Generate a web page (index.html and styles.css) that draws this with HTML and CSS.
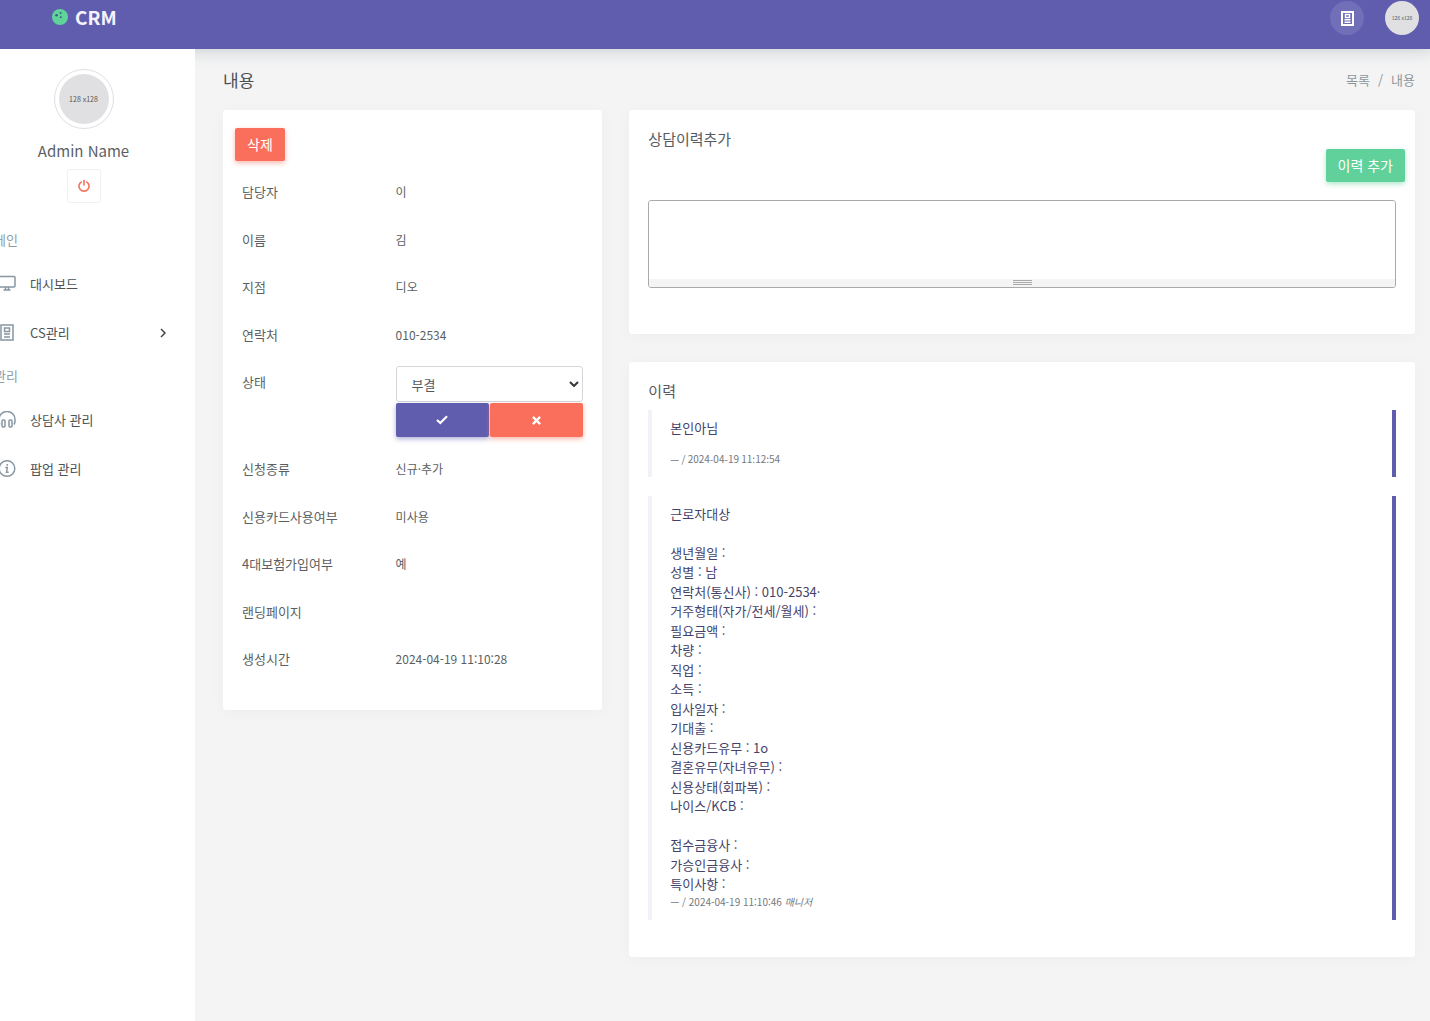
FILE: index.html
```html
<!DOCTYPE html>
<html lang="ko">
<head>
<meta charset="utf-8">
<meta name="viewport" content="width=device-width, initial-scale=1">
<title>CRM</title>
<link rel="stylesheet" href="styles.css">
</head>
<body>
<header class="topbar">
  <a class="brand" href="#">
    <svg class="brand-mark" viewBox="0 0 16 16" aria-hidden="true"><circle cx="8" cy="8" r="8" fill="#5fd39a"/><g fill="#3d5b87"><circle cx="4.600" cy="6.200" r="1.300"/><circle cx="8.600" cy="4" r="1"/><circle cx="8.800" cy="8.200" r="1"/></g></svg>
    <span>CRM</span>
  </a>
  <div class="topbar-tools">
    <button class="tool" type="button" aria-label="CS관리">
      <svg width="13" height="15" viewBox="0 0 13 15" fill="none" stroke="#fff" aria-hidden="true"><rect x="1" y="1" width="11" height="13" stroke-width="2"/><rect x="4.500" y="3.500" width="4" height="3" stroke-width="1.400"/><path d="M3.500 8.800h6M3.500 11.200h6" stroke-width="1.400"/></svg>
    </button>
    <a class="tool-avatar" href="#">128 x128</a>
  </div>
</header>
<div class="shell">
  <nav class="sidebar">
    <div class="profile">
      <div class="avatar-ring"><span class="avatar">128 x128</span></div>
      <div class="profile-name">Admin Name</div>
      <button class="power" type="button" aria-label="로그아웃">
        <svg width="12" height="12" viewBox="0 0 12 12" fill="none" stroke="#f9705d" stroke-width="1.600" aria-hidden="true"><path d="M3.800 1.600a5 5 0 1 0 4.400 0M6 0v5.600"/></svg>
      </button>
    </div>
    <h2 class="menu-title">메인</h2>
    <ul class="menu">
      <li><a href="#">
        <svg viewBox="0 0 18 18" aria-hidden="true"><rect x="1" y="1.500" width="16" height="10.500" rx="1"/><path d="M7.500 12v3M10.500 12v3M5.500 15h7"/></svg>
        <span>대시보드</span></a></li>
      <li><a href="#">
        <svg viewBox="0 0 18 18" aria-hidden="true"><path d="M3 1h12v15H3zM6.500 4h5v3.500h-5zM6 10h6M6 13h6"/></svg>
        <span>CS관리</span>
        <svg class="chevron" viewBox="0 0 6 10" aria-hidden="true"><path d="m1 1 4 4-4 4"/></svg></a></li>
    </ul>
    <h2 class="menu-title">관리</h2>
    <ul class="menu">
      <li><a href="#">
        <svg viewBox="0 0 18 18" aria-hidden="true"><path d="M2 13.500C.8 11.500.8 10 1 8.500a8 8 0 0 1 16 0c.2 1.500.2 3-1 5"/><rect x="4" y="9" width="3" height="7" rx="1"/><rect x="11" y="9" width="3" height="7" rx="1"/></svg>
        <span>상담사 관리</span></a></li>
      <li><a href="#">
        <svg viewBox="0 0 18 18" aria-hidden="true"><circle cx="9" cy="8.500" r="7.800"/><path d="M7.300 7.500H9.300L8.500 12.300h2.200M9.300 4v1.800"/></svg>
        <span>팝업 관리</span></a></li>
    </ul>
  </nav>
  <main class="content">
    <div class="page-head">
      <h1>내용</h1>
      <nav class="crumbs" aria-label="경로"><a href="#">목록</a><span>/</span><span>내용</span></nav>
    </div>
    <div class="columns">
      <section class="card detail">
        <button class="btn btn-danger btn-delete" type="button">삭제</button>
        <dl class="fields">
          <div class="field"><dt>담당자</dt><dd>이</dd></div>
          <div class="field"><dt>이름</dt><dd>김</dd></div>
          <div class="field"><dt>지점</dt><dd>디오</dd></div>
          <div class="field"><dt>연락처</dt><dd>010-2534</dd></div>
          <div class="field"><dt><label for="status">상태</label></dt>
            <dd class="editor">
              <div class="select-wrap">
                <select id="status"><option>부결</option></select>
                <svg viewBox="0 0 10 6" aria-hidden="true"><path d="m1 1 4 4 4-4"/></svg>
              </div>
              <div class="editor-actions">
                <button class="btn btn-primary" type="button" aria-label="저장"><svg width="12" height="10" viewBox="0 0 12 10" fill="none" stroke="#fff" stroke-width="2.200" aria-hidden="true"><path d="m1 5 3.300 3L11 1.300"/></svg></button>
                <button class="btn btn-danger" type="button" aria-label="취소"><svg width="9" height="9" viewBox="0 0 8 8" fill="none" stroke="#fff" stroke-width="2" aria-hidden="true"><path d="m.8.8 6.400 6.400M7.200.8.8 7.200"/></svg></button>
              </div>
            </dd></div>
          <div class="field"><dt>신청종류</dt><dd>신규·추가</dd></div>
          <div class="field"><dt>신용카드사용여부</dt><dd>미사용</dd></div>
          <div class="field"><dt>4대보험가입여부</dt><dd>예</dd></div>
          <div class="field"><dt>랜딩페이지</dt><dd></dd></div>
          <div class="field"><dt>생성시간</dt><dd>2024-04-19 11:10:28</dd></div>
        </dl>
      </section>
      <div class="side">
        <section class="card">
          <h2 class="card-title"><label for="memo">상담이력추가</label></h2>
          <div class="add-row"><button class="btn btn-success" type="button">이력 추가</button></div>
          <div class="memo">
            <textarea id="memo"></textarea>
            <div class="grip"><svg width="19" height="6" viewBox="0 0 19 6" aria-hidden="true"><path d="M0 .5h19M0 2.500h19M0 4.500h19" stroke="#aaa"/></svg></div>
          </div>
        </section>
        <section class="card">
          <h2 class="card-title">이력</h2>
          <blockquote class="entry">
            <p class="spaced">본인아님</p>
            <footer>— / 2024-04-19 11:12:54</footer>
          </blockquote>
          <blockquote class="entry">
            <p>근로자대상

생년월일 :
성별 : 남
연락처(통신사) : 010-2534·
거주형태(자가/전세/월세) :
필요금액 :
차량 :
직업 :
소득 :
입사일자 :
기대출 :
신용카드유무 : 1o
결혼유무(자녀유무) :
신용상태(회파복) :
나이스/KCB :

접수금융사 :
가승인금융사 :
특이사항 :</p>
            <footer>— / 2024-04-19 11:10:46 <cite>매니저</cite></footer>
          </blockquote>
        </section>
      </div>
    </div>
  </main>
</div>
</body>
</html>
```
FILE: styles.css
```css
* { box-sizing: border-box; }
body {
  margin: 0;
  min-height: 100vh;
  display: flex;
  flex-direction: column;
  background: #f4f4f4;
  color: #5b5f63;
  font: 13px/1.5 "Noto Sans CJK KR", sans-serif;
  overflow-x: hidden;
}
h1, h2, p, ul, dl, dd, blockquote { margin: 0; padding: 0; font-weight: 400; }
ul { list-style: none; }
a { color: inherit; text-decoration: none; }
button, select, textarea { font: inherit; }
button { cursor: pointer; }
svg { display: block; flex: none; }

.topbar {
  display: flex;
  justify-content: space-between;
  align-items: flex-start;
  padding: 1px 11px 14px 52px;
  background: #605daf;
  box-shadow: 0 1px 14px 2px rgba(96, 110, 130, .25);
}
.brand {
  display: flex;
  align-items: center;
  gap: 7px;
  color: #f4f3fb;
  font-size: 19px;
  font-weight: 700;
  line-height: 32px;
}
.brand-mark { width: 16px; height: 16px; }
.topbar-tools { display: flex; gap: 21px; }
.tool, .tool-avatar {
  width: 34px;
  height: 34px;
  border: 0;
  border-radius: 50%;
  display: flex;
  align-items: center;
  justify-content: center;
}
.tool { background: #726fb9; padding: 0; }
.tool-avatar { background: #e0e0e2; color: #555; font-size: 5px; white-space: nowrap; }

.shell { flex: 1; display: flex; }
.sidebar {
  position: relative;
  flex: none;
  width: 223px;
  margin-left: -28px;
  padding-top: 20px;
  background: #fff;
}
.profile { display: flex; flex-direction: column; align-items: center; }
.avatar-ring { padding: 4px; border: 1px solid #dcdfe3; border-radius: 50%; }
.avatar {
  width: 50px;
  height: 50px;
  border-radius: 50%;
  background: #e0e0e2;
  color: #555;
  font-size: 7px;
  display: flex;
  align-items: center;
  justify-content: center;
}
.profile-name { margin-top: 10px; font-size: 15px; line-height: 24px; }
.power {
  margin-top: 6px;
  width: 34px;
  height: 34px;
  padding: 0;
  border: 1px solid #f0f1f3;
  border-radius: 2px;
  background: #fff;
  display: flex;
  align-items: center;
  justify-content: center;
}
.menu-title { padding: 10px 22px; font-size: 13px; line-height: 18px; color: #8d9ea8; }
.menu-title:first-of-type { margin-top: 18px; }
.menu a {
  display: flex;
  align-items: center;
  gap: 14px;
  height: 49px;
  padding: 0 29px 0 26px;
  color: #4d5257;
}
.menu svg { width: 18px; height: 18px; fill: none; stroke: #8797a3; stroke-width: 1.5; }
.menu .chevron { width: 6px; height: 10px; margin-left: auto; stroke: #40454a; }

.content { flex: 1; min-width: 0; padding: 0 15px 63px 28px; }
.page-head { display: flex; justify-content: space-between; align-items: center; height: 61px; }
h1 { font-size: 17px; color: #4c5055; }
.crumbs { display: flex; gap: 8px; color: #8b989e; }
.columns { display: grid; grid-template-columns: repeat(3, minmax(0, 1fr)); column-gap: 27px; align-items: start; }
.side { grid-column: span 2; display: grid; gap: 28px; }
.card {
  padding: 17px 19px 37px;
  background: #fff;
  border-radius: 3px;
  box-shadow: 0 2px 16px rgba(0, 0, 0, .03);
}
.card-title { font-size: 15px; line-height: 23px; color: #565a5f; }

.btn {
  min-height: 33px;
  padding: 0 12px;
  border: 0;
  border-radius: 2px;
  color: #fff;
  font-size: 14px;
  display: flex;
  align-items: center;
  justify-content: center;
}
.btn-danger { background: #fa6f5c; box-shadow: 0 2px 5px rgba(250, 111, 92, .5); }
.btn-primary { background: #605daf; box-shadow: 0 2px 5px rgba(96, 93, 175, .5); }
.btn-success { background: #60d19a; box-shadow: 0 2px 5px rgba(96, 209, 154, .5); }

.detail { padding-top: 18px; padding-bottom: 27px; }
.btn-delete { margin-left: -7px; }
.fields { margin-top: 7px; }
.field { display: grid; grid-template-columns: 45% 1fr; }
.field dt, .field dd { padding: 14px 0; }
.field dd { font-size: 12px; line-height: 19px; }
.field .editor { padding: 8px 0; font-size: 13px; }
.select-wrap { display: grid; align-items: center; }
.select-wrap > * { grid-area: 1 / 1; }
.select-wrap select {
  appearance: none;
  width: 100%;
  height: 36px;
  padding: 0 15px;
  border: 1px solid #d4d8dc;
  border-radius: 3px;
  background: #fff;
  color: #53585d;
}
.select-wrap svg {
  justify-self: end;
  width: 10px;
  height: 6px;
  margin-right: 4px;
  fill: none;
  stroke: #33373b;
  stroke-width: 2;
  pointer-events: none;
}
.editor-actions { display: grid; grid-template-columns: 1fr 1fr; gap: 1px; margin-top: 1px; }
.editor-actions .btn { min-height: 34px; }

.add-row { display: flex; justify-content: flex-end; margin: -1px -9px 18px 0; }
.memo { border: 1px solid #aaa; border-radius: 3px; margin-bottom: 9px; overflow: hidden; }
.memo textarea { display: block; width: 100%; height: 78px; padding: 4px; border: 0; resize: none; outline: 0; }
.grip { display: flex; justify-content: center; align-items: center; height: 8px; background: #f4f4f4; }

.entry {
  margin-top: 19px;
  padding: 8px 18px 10px;
  border-left: 4px solid #f1f1f8;
  border-right: 4px solid #605daf;
  color: #45436b;
}
.card-title + .entry { margin-top: 8px; }
.entry p { white-space: pre-line; }
.entry .spaced { margin-bottom: 13px; }
.entry footer { font-size: 10px; line-height: 16px; color: #74797e; }
```
